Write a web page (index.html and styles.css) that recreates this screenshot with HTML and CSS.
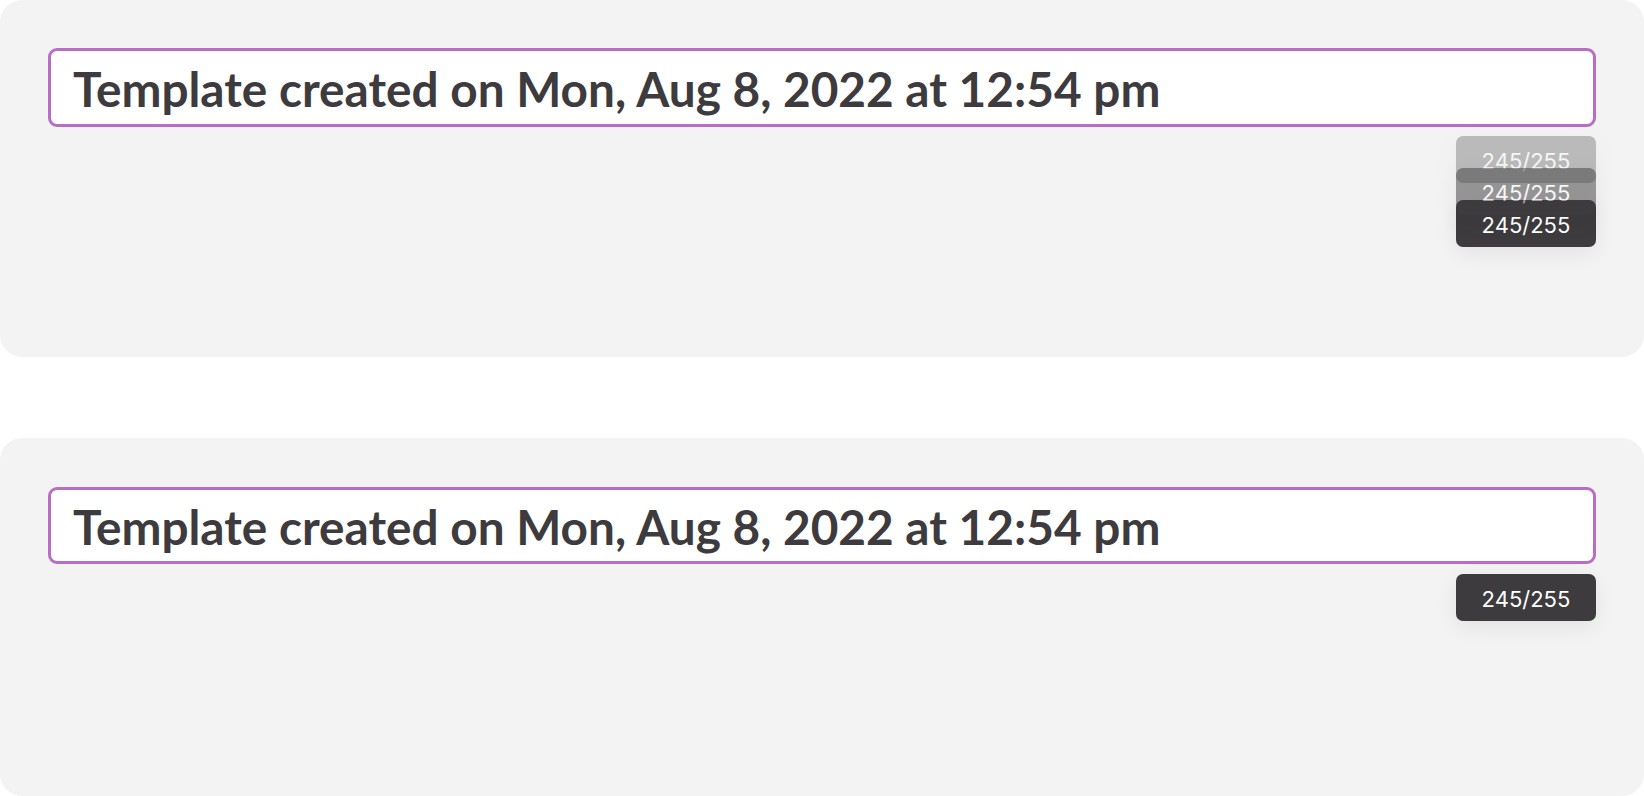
FILE: index.html
```html
<!doctype html>
<html lang="en">
<head>
    <meta charset="UTF-8">
    <meta name="viewport" content="width=device-width, initial-scale=1.0">
    <title>Template name</title>
    <link rel="stylesheet" href="styles.css">
</head>
<body>
<section class="panel">
    <div class="field">Template created on Mon, Aug 8, 2022 at 12:54 pm</div>
    <div class="counters">
        <span class="counter faint">245/255</span>
        <span class="counter half">245/255</span>
        <span class="counter">245/255</span>
    </div>
</section>

<section class="panel second">
    <div class="field">Template created on Mon, Aug 8, 2022 at 12:54 pm</div>
    <div class="counters">
        <span class="counter">245/255</span>
    </div>
</section>
</body>
</html>
```

FILE: styles.css
```css
body {
    margin: 0;
    background: #fff;
    font-family: "Lato", "Noto Sans", sans-serif;
    color: #3d3b3d;
}

.panel {
    box-sizing: border-box;
    height: 357px;
    padding: 48px 48px 0;
    background: #f3f3f3;
    border-radius: 22px;

    &.second {
        margin-top: 81px;
        height: 358px;
        padding-top: 49px;
    }
}

.field {
    box-sizing: border-box;
    display: flex;
    align-items: center;
    height: 79px;
    padding: 2px 22px 0;
    background: #fff;
    border: 3px solid #b86ec6;
    border-radius: 9px;
    font-size: 47.75px;
    font-weight: 700;
    white-space: nowrap;
}

.second .field {
    height: 77px;
}

.counters {
    display: flex;
    flex-direction: column;
    align-items: flex-end;
    margin-top: 9px;
}

.second .counters {
    margin-top: 10px;
}

.counter {
    box-sizing: border-box;
    display: flex;
    align-items: center;
    justify-content: center;
    width: 140px;
    height: 47px;
    padding-top: 2px;
    background: #3d3b3d;
    color: #fff;
    border-radius: 7px;
    font-family: "Inter", "Noto Sans", sans-serif;
    font-size: 22px;
    box-shadow: 0 6px 22px rgba(0, 0, 0, 0.07);

    & + & {
        margin-top: -15px;
    }

    &.faint {
        opacity: 0.3;
    }

    &.half {
        opacity: 0.5;
    }
}
```
